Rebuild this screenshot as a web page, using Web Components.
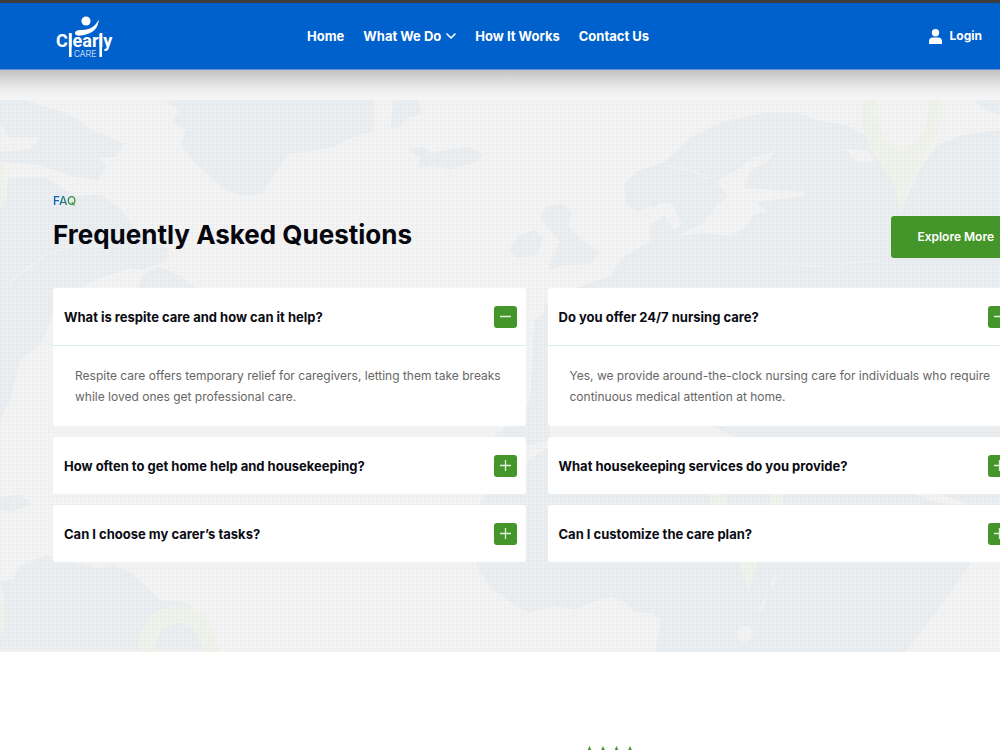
<!DOCTYPE html>
<html lang="en">
<head>
<meta charset="utf-8">
<meta name="viewport" content="width=device-width, initial-scale=1">
<title>Clearly Care – FAQ</title>
<style>
  body { margin: 0; background: #fff; font-family: Inter, "Open Sans", sans-serif; overflow-x: hidden; }
</style>
</head>
<body>
<site-header></site-header>
<main>
  <faq-section>
    <faq-column>
      <faq-item open heading="What is respite care and how can it help?">Respite care offers temporary relief for caregivers, letting them take breaks while loved ones get professional care.</faq-item>
      <faq-item heading="How often to get home help and housekeeping?"></faq-item>
      <faq-item heading="Can I choose my carer’s tasks?"></faq-item>
    </faq-column>
    <faq-column>
      <faq-item open heading="Do you offer 24/7 nursing care?">Yes, we provide around-the-clock nursing care for individuals who require continuous medical attention at home.</faq-item>
      <faq-item heading="What housekeeping services do you provide?"></faq-item>
      <faq-item heading="Can I customize the care plan?"></faq-item>
    </faq-column>
  </faq-section>
  <star-rating></star-rating>
</main>

<script>
function define(name, html, setup) {
  customElements.define(name, class extends HTMLElement {
    connectedCallback() {
      if (this.shadowRoot) return;
      const t = document.createElement('template');
      t.innerHTML = html;
      this.attachShadow({ mode: 'open' }).append(t.content.cloneNode(true));
      if (setup) setup(this, this.shadowRoot);
    }
  });
}

define('site-logo', `
<style>
  :host { display: block; }
  a, svg { display: block; }
</style>
<a href="#" aria-label="Clearly Care">
<svg width="60" height="46" viewBox="54 13 60 46" fill="#fff" font-family="Roboto, sans-serif">
  <circle cx="86" cy="21" r="4.6"/>
  <path d="M75 33.500C75 30.500 78 30 82 30C90 30 95.500 26 98.800 19.500C98.300 27 94.500 32 86 34.500C80 36.300 75.200 36 75 33.500Z"/>
  <text x="56" y="47" font-size="18" font-weight="700">Clearly</text>
  <rect x="69" y="34" width="2.600" height="23"/>
  <rect x="99.400" y="34" width="2.600" height="23"/>
  <text x="74" y="57" font-size="9" font-weight="300">CARE</text>
</svg></a>`);

define('site-header', `
<style>
  :host { display: block; background: #0060cc;
    border-top: 3px solid #3c3c3c; border-bottom: 1px solid #5c92d4; }
  header { display: flex; align-items: center; height: 66px; padding: 0 18px 0 54px; }
  nav { display: flex; gap: 19px; margin-left: 193px; }
  a { display: flex; align-items: center; gap: 5px; color: #fff; text-decoration: none;
    font-size: 13px; line-height: 20px; font-weight: 700; white-space: nowrap; }
  .login { margin-left: auto; gap: 8px; font-size: 12px; }
</style>
<header>
  <site-logo></site-logo>
  <nav>
    <a href="#">Home</a>
    <a href="#">What We Do <svg width="10" height="6" viewBox="0 0 10 6" fill="none" stroke="#fff" stroke-width="1.600" stroke-linecap="round" stroke-linejoin="round"><path d="M1 1l4 4 4-4"/></svg></a>
    <a href="#">How It Works</a>
    <a href="#">Contact Us</a>
  </nav>
  <a class="login" href="#"><svg width="13" height="15" viewBox="0 0 13 15" fill="#fff"><circle cx="6.500" cy="3.700" r="3.700"/><path d="M0 15v-2.500Q0 8.500 4 8.500h5q4 0 4 4V15z"/></svg>Login</a>
</header>`);

define('world-map', `
<style>
  :host { display: block; position: absolute; inset: 0; }
  svg { display: block; width: 100%; height: 100%; }
</style>
<svg viewBox="0 100 1000 552" preserveAspectRatio="xMinYMin slice" aria-hidden="true">
  <defs><pattern id="grid" width="8" height="8" patternUnits="userSpaceOnUse">
    <path d="M0 .5H8M.5 0V8" stroke="#000" stroke-opacity=".014"/><path d="M0 4.500H8M4.500 0V8" stroke="#000" stroke-opacity=".008"/>
  </pattern></defs>
  <g fill="#ebeef1">
    <path d="M0 100H25C45 108 75 112 88 128L124 144L116 157L98 158L106 166L98 180L72 176L38 165L0 162V152L30 149L40 138L8 137L0 122Z"/>
    <path d="M8 178L45 177L75 196L100 194L122 210L135 230L168 250L165 262L142 270L130 268L95 280L60 300L40 345L20 360L10 400L0 420V208L6 200Z"/>
    <path d="M142 276L158 266L180 276L195 288H138Z"/>
    <path d="M165 100H374V131L355 136L330 148L288 154L272 178L262 194L240 196L222 188L205 172L192 160L181 145L186 130L172 122L180 112Z"/>
    <path d="M393 100H418L422 114L408 118L400 127L391 128Z"/>
    <path d="M408 149L424 147L432 153L450 149L470 147L483 155L474 163L450 169L430 166L418 167L420 158Z"/>
    <path d="M510 250L518 236L535 230L543 238L538 254L518 258Z"/>
    <path d="M540 218L546 206L562 204L572 212L568 226L584 242L600 252L590 264L565 265L548 270L554 254L560 242L550 230Z"/>
    <path d="M624 184L638 171L664 162L690 138L722 122L768 112L800 113L820 121L846 125L868 137L885 160L902 208L918 172L936 146L962 135L1000 130V652H905L950 600L975 562L970 505L900 480L740 440L700 420L660 410L620 395L580 380L555 360L540 330L545 305L570 290L610 276L622 258L645 244L650 222L662 208L650 206L638 212L626 204Z"/>
    <path d="M534 320L550 310V440L510 450L494 436L515 420L530 400Z"/>
    <path d="M490 485L560 440L780 440L930 500L970 510V565L945 600L905 652H655L661 620L652 613L635 612L625 602L612 597L598 600L575 609L555 606L528 613L508 600L490 588L476 564L466 530Z"/>
    <path d="M974 100H1000V115L982 108Z"/>
    <path d="M0 497L20 495L32 504L12 512L0 510Z"/>
    <path d="M0 582L14 578L20 566L46 555L72 562L98 568L115 565L130 572L152 592L160 600L184 602L200 614L218 650H0V610L4 600Z"/>
  </g>
  <g fill="#f3f3f3">
    <path d="M717 181L738 169L752 158L775 151L768 161L750 171L744 188L804 192L804 196L756 202L768 212L754 214L745 228L730 236L705 233L678 236L702 224L716 206L728 196Z"/>
    <path d="M646 218L660 203L672 204L682 224L674 230L664 215L650 226L650 242L632 250L636 230Z"/>
    <path d="M846 149L868 151L876 162L856 162Z"/>
    <circle cx="745" cy="634" r="8"/>
    <path d="M774 575L777 576L774 586L770 586ZM763 600L767 598L762 611L758 613Z"/>
    <path d="M972 562H1000V652H905L945 600Z"/>
  </g>
  <path d="M665 166L690 170L708 178M778 264L824 266M840 264L880 260M10 282L45 255L80 242" fill="none" stroke="#f0f1f2" stroke-width="2"/>
  <g fill="#f0f3eb">
    <path fill-rule="evenodd" d="M864 100H942Q944 130 922 160L906 190L901 216L894 184L875 157Q858 130 864 100ZM878 100Q876 128 888 142Q902 150 916 142Q930 128 928 100Z"/>
    <path fill-rule="evenodd" d="M138 652C138 590 217 590 217 652ZM155 652C153 614 202 614 201 652Z"/>
    <path d="M710 492H725L728 510H710ZM770 492H783V510H770ZM738 558H759L748 592Z"/>
    <path d="M0 160L5 170V200L0 206ZM0 605H4V630L0 634Z"/>
  </g>
  <rect x="0" y="100" width="100%" height="552" fill="url(#grid)"/>
</svg>`);

define('faq-section', `
<style>
  :host { display: block; padding-top: 30px;
    background: linear-gradient(#c0c0c0, #d6d6d6 8px, #eaeaea 18px, #f5f5f5 28px); }
  section { position: relative; overflow: hidden; background: #f3f3f3; }
  .inner { position: relative; padding: 92px 0 90px 53px; margin-right: -20px; }
  .top { display: flex; justify-content: space-between; align-items: flex-end; margin-bottom: 30px; }
  .titles { padding-bottom: 4px; }
  .tag { display: block; width: max-content; margin: 0 0 6px; font-size: 12px; line-height: 18px; font-weight: 500;
    background: linear-gradient(90deg, #0060cc, #45962a); -webkit-background-clip: text; background-clip: text; color: transparent; }
  h2 { margin: 0; font-size: 26px; line-height: 38px; font-weight: 700; color: #06060f; }
  .more { border: 0; border-radius: 3px; background: #45962a; color: #fff; font: 600 12px/18px Inter, sans-serif; padding: 12px 26px; white-space: nowrap; }
  .cols { display: grid; grid-template-columns: 1fr 1fr; gap: 22px; align-items: start; }
</style>
<section>
  <world-map></world-map>
  <div class="inner">
    <div class="top">
      <div class="titles"><p class="tag">FAQ</p><h2>Frequently Asked Questions</h2></div>
      <button class="more" type="button">Explore More</button>
    </div>
    <div class="cols"><slot></slot></div>
  </div>
</section>`);

define('faq-column', `
<style>:host { display: flex; flex-direction: column; gap: 11px; min-width: 0; }</style>
<slot></slot>`);

define('faq-item', `
<style>
  :host { display: block; background: #fff; border-radius: 3px; }
  h3 { margin: 0; }
  button { display: flex; align-items: center; justify-content: space-between; width: 100%; min-height: 57px;
    border: 0; background: none; padding: 0 9px 0 11px; text-align: left;
    font: 700 13px/20px Inter, sans-serif; color: #0b0b14; }
  .sign { display: block; flex: none; width: 23px; height: 22px; border-radius: 3px; background: #45962a; }
  .body { display: none; border-top: 1px solid #d8eeec; padding: 19px 22px; font-size: 12px; line-height: 21px; color: #666; }
  :host([open]) .body { display: block; }
  :host([open]) .v { display: none; }
</style>
<h3><button type="button"><span class="q"></span>
<svg class="sign" viewBox="0 0 23 22" fill="none" stroke="#e4f2df" stroke-width="1.300"><path d="M6 10.500h11"/><path class="v" d="M11.500 5v11"/></svg></button></h3>
<div class="body"><slot></slot></div>`, (host, root) => {
  root.querySelector('.q').textContent = host.getAttribute('heading');
  const b = root.querySelector('button');
  b.setAttribute('aria-expanded', host.hasAttribute('open'));
  b.addEventListener('click', () => b.setAttribute('aria-expanded', host.toggleAttribute('open')));
});

define('star-rating', `
<style>
  :host { display: flex; justify-content: center; padding: 94px 0 0 220px; }
  svg { display: block; width: 54px; height: 14px; }
</style>
<svg viewBox="0 0 54 14" fill="#45962a" role="img" aria-label="Rating">
  <defs><path id="s" d="M6.500 0l2 4.500 4.500.5-3.400 3.200 1 4.800-4.100-2.500L2.400 13l1-4.800L0 5l4.500-.5z"/></defs>
  <use href="#s"/><use href="#s" x="13.500"/><use href="#s" x="27"/><use href="#s" x="40.500"/>
</svg>`);
</script>
</body>
</html>
